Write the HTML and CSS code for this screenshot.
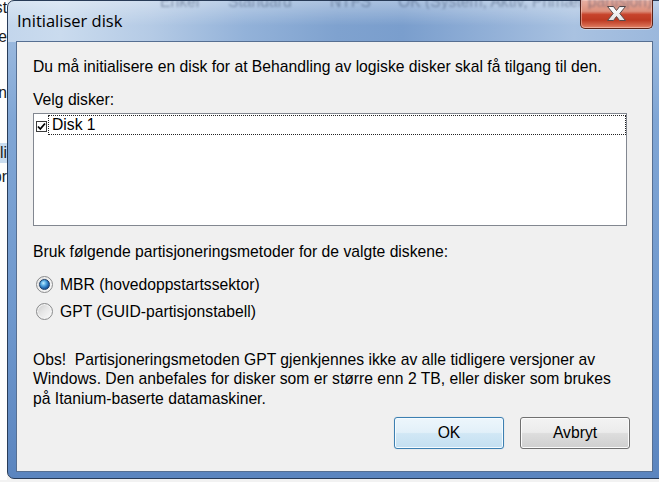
FILE: index.html
```html
<!DOCTYPE html>
<html lang="no">
<head>
<meta charset="utf-8">
<title>Initialiser disk</title>
<link rel="stylesheet" href="styles.css">
</head>
<body>
<div class="desk">
  <div class="behind">
    <div class="frag f1"><span>Innst</span></div>
    <div class="frag f2"><span>Disse</span></div>
    <div class="frag f3"><span>Kolon</span></div>
    <div class="frag f4 sel"><span>Volumli</span></div>
    <div class="frag f5"><span>Oppr</span></div>
  </div>
  <div class="window">
    <div class="titlebar">
      <div class="ghost">
        <span class="g g1">Enkel</span>
        <span class="g g2">Standard</span>
        <span class="g g3">NTFS</span>
        <span class="g g4">OK (System, Aktiv, Primær partisjon)</span>
      </div>
      <span class="title">Initialiser disk</span>
      <button class="close" type="button" aria-label="Lukk">
        <svg width="21" height="17" viewBox="0 0 21 17">
          <defs>
            <linearGradient id="xg" x1="0" y1="0" x2="0" y2="1">
              <stop offset="0" stop-color="#ffffff"/>
              <stop offset="1" stop-color="#e2e2e2"/>
            </linearGradient>
          </defs>
          <polygon points="1.5,1.5 7.5,1.5 10.5,5.5 13.5,1.5 19.5,1.5 13.8,8.5 19.5,15.5 13.5,15.5 10.5,11.5 7.5,15.5 1.5,15.5 7.2,8.5" fill="url(#xg)" stroke="#5a4a48" stroke-width="1" stroke-linejoin="round"/>
        </svg>
      </button>
    </div>
    <div class="panel">
      <p class="intro">Du må initialisere en disk for at Behandling av logiske disker skal få tilgang til den.</p>
      <p class="label">Velg disker:</p>
      <div class="listbox">
        <div class="item">
          <span class="check">
            <svg width="9" height="9" viewBox="0 0 9 9"><polyline points="1,4.5 3.3,7 8,1.5" fill="none" stroke="#000" stroke-width="1.8"/></svg>
          </span>
          <span class="focus">Disk 1</span>
        </div>
      </div>
      <p class="label2">Bruk følgende partisjoneringsmetoder for de valgte diskene:</p>
      <div class="radios">
        <div class="radio"><span class="dot on"></span><span>MBR (hovedoppstartssektor)</span></div>
        <div class="radio"><span class="dot"></span><span>GPT (GUID-partisjonstabell)</span></div>
      </div>
      <p class="note">Obs!&nbsp; Partisjoneringsmetoden GPT gjenkjennes ikke av alle tidligere versjoner av<br>Windows. Den anbefales for disker som er større enn 2 TB, eller disker som brukes<br>på Itanium-baserte datamaskiner.</p>
      <div class="buttons">
        <button class="btn default" type="button">OK</button>
        <button class="btn" type="button">Avbryt</button>
      </div>
    </div>
  </div>
</div>
</body>
</html>
```

FILE: styles.css
```css
* { box-sizing: border-box; }
html, body { margin: 0; padding: 0; }
body {
  width: 659px;
  height: 482px;
  overflow: hidden;
  background: #f2f2f2;
  font-family: "Liberation Sans", Arial, sans-serif;
  font-size: 15.7px;
  line-height: 19.5px;
  color: #000;
}
p { margin: 0; }

.desk {
  display: flex;
  align-items: flex-start;
  height: 482px;
}

/* window behind the dialog, clipped at the left */
.behind {
  flex: none;
  width: 7px;
  height: 480px;
  overflow: hidden;
  background: #fdfdfd;
  display: flex;
  flex-direction: column;
}
.frag {
  flex: none;
  height: 19.5px;
  display: flex;
  justify-content: flex-end;
  white-space: nowrap;
  color: #1a1a1a;
}
.f1 { margin-top: -2px; }
.f2 { margin-top: 9.5px; }
.f3 { margin-top: 36.5px; }
.f4 { margin-top: 40.5px; }
.f5 { margin-top: 4.5px; }
.sel { background: #c9dcef; }

/* the dialog window */
.window {
  flex: none;
  width: 660px;
  height: 479px;
  border: 1px solid #283b57;
  border-radius: 7px 7px 0 7px;
  padding: 0 13px 6px 8px;
  display: flex;
  flex-direction: column;
  background:
    linear-gradient(180deg, rgba(255,255,255,0.35), rgba(255,255,255,0) 60%) top / 100% 41px no-repeat,
    linear-gradient(90deg, #c3d6ec 0%, #cadbee 8%, #b4cae5 22%, #93b2d9 36%, #7fa2cf 50%, #7a9ecd 60%, #93b1d8 74%, #a9c2e1 86%, #9ab7dc 100%) top / 100% 41px no-repeat,
    linear-gradient(180deg, #a6c1e2 0%, #80a6d5 25%, #6f98cd 65%, #5b85bf 100%);
}

.titlebar {
  flex: none;
  height: 40px;
  display: grid;
  grid-template-columns: 1fr 73px;
  grid-template-rows: 8px 32px;
}
.ghost {
  grid-column: 1 / 3;
  grid-row: 1;
  margin-top: -9px;
  height: 17px;
  display: flex;
  white-space: nowrap;
  padding-left: 144px;
  color: rgba(25, 45, 80, 0.38);
  filter: blur(1px);
  overflow: hidden;
}
.g { flex: none; }
.g1 { width: 68px; }
.g2 { width: 102px; }
.g3 { width: 68px; }

.title {
  grid-column: 1;
  grid-row: 2;
  padding: 0.5px 0 0 1px;
  font-family: "Open Sans", "Noto Sans", sans-serif;
  font-size: 16.5px;
  line-height: 22.5px;
  color: #000;
}
.close {
  grid-column: 2;
  grid-row: 1 / 3;
  align-self: start;
  margin-top: -1px;
  height: 29px;
  padding: 0;
  border: 1px solid #5b2216;
  border-top: none;
  border-radius: 0 0 5px 5px;
  display: flex;
  align-items: center;
  justify-content: center;
  background: linear-gradient(180deg, #e9b1a4 0%, #dc907c 40%, #c7442c 52%, #bd3a22 72%, #d4654a 90%, #e0876c 100%);
  box-shadow: inset 0 0 0 1px rgba(255, 220, 210, 0.45), 0 1px 0 rgba(255,255,255,0.35);
}
.close svg { display: block; margin-top: -1px; }

.panel {
  flex: 1;
  border: 1px solid #566f92;
  background: #f0f0f0;
  padding: 15px 25px 0 16px;
}
.label { margin-top: 13.3px; }

.listbox {
  margin-top: 3.7px;
  height: 113px;
  border: 1px solid #828790;
  background: #fff;
  padding-top: 1px;
}
.item {
  display: flex;
  align-items: flex-start;
  height: 20px;
}
.check {
  flex: none;
  width: 11px;
  height: 11px;
  margin: 6.5px 1px 0 2px;
  border: 1px solid #3c3c3c;
  background: #fff;
  display: flex;
  align-items: center;
  justify-content: center;
}
.check svg { display: block; }
.focus {
  flex: 1;
  height: 20px;
  border: 1px dotted #222;
  padding-left: 3px;
  line-height: 18px;
}

.label2 { margin-top: 15.8px; }

.radios { margin-top: 9.7px; }
.radio {
  display: flex;
  align-items: center;
  height: 27px;
}
.dot {
  flex: none;
  width: 17px;
  height: 17px;
  margin: 0 7px 0 3px;
  border-radius: 50%;
  border: 1px solid #8a8b8c;
  background: linear-gradient(135deg, #cbcbcb 0%, #e6e6e6 45%, #fbfbfb 100%);
  box-shadow: inset 0 0 0 1px #f4f4f4;
  display: flex;
  align-items: center;
  justify-content: center;
}
.dot.on::after {
  content: "";
  width: 9px;
  height: 9px;
  border-radius: 50%;
  border: 1px solid #1c3f6a;
  background: radial-gradient(circle at 38% 35%, #c4ecff 0%, #5fb3e8 28%, #1f66b0 62%, #0d3b72 100%);
}

.note { margin-top: 24.8px; }

.buttons {
  margin-top: 8.7px;
  margin-right: -3px;
  display: flex;
  justify-content: flex-end;
  gap: 16px;
}
.btn {
  width: 110px;
  height: 32px;
  padding: 0;
  font-family: "Liberation Sans", Arial, sans-serif;
  font-size: 15.7px;
  line-height: 19.5px;
  color: #000;
  border: 1px solid #707070;
  border-radius: 3px;
  background: linear-gradient(180deg, #f3f3f3 0%, #ebebeb 48%, #dddddd 52%, #cfcfcf 100%);
  box-shadow: inset 0 0 0 1px #fbfbfb;
}
.btn.default {
  border-color: #3c7fb1;
  background: linear-gradient(180deg, #edf6fc 0%, #e2f0f9 48%, #d1e7f5 52%, #c3dff1 100%);
  box-shadow: inset 0 0 0 1px #f4fbff, 0 0 1px rgba(60, 127, 177, 0.4);
}
```
